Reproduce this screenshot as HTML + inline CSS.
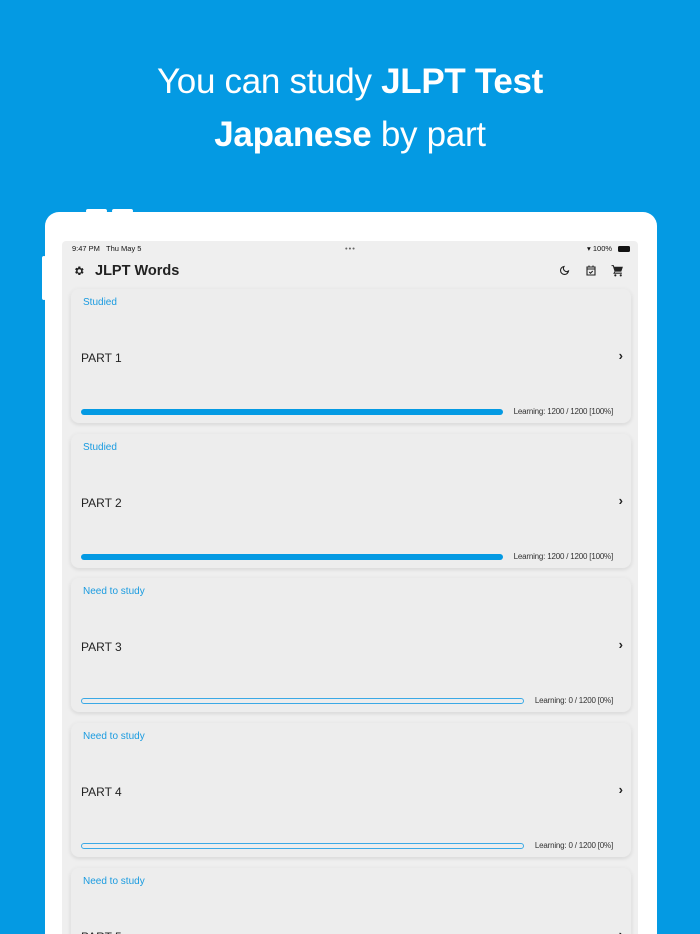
<!DOCTYPE html>
<html><head><meta charset="utf-8"><style>
*{margin:0;padding:0;box-sizing:border-box}
html,body{width:700px;height:934px;overflow:hidden}
body{background:#049ae3;font-family:"Liberation Sans",sans-serif;position:relative}
.h{position:absolute;left:0;width:700px;text-align:center;color:#fff;font-size:35px;letter-spacing:-0.3px}
.h b{font-weight:bold}
.frame{position:absolute;left:45px;top:212px;width:612px;height:722px;background:#fff;border-radius:14px 14px 0 0}
.btn{position:absolute;top:209px;height:4px;width:21px;background:#fff;border-radius:2px}
.side{position:absolute;left:42px;top:256px;width:4px;height:44px;background:#fff;border-radius:2px}
.screen{position:absolute;left:62px;top:241px;width:576px;height:693px;background:#efefef;border-radius:4px 4px 0 0;overflow:hidden}
.sb{position:absolute;top:3px;font-size:7.5px;color:#111}
.title{position:absolute;left:33px;top:22px;font-size:14.5px;font-weight:bold;color:#222}
.card{position:absolute;left:9px;width:560px;height:134px;background:#ededed;border-radius:8px;box-shadow:0 1px 4px rgba(0,0,0,.15),0 0 2px rgba(255,255,255,.9)}
.lab{position:absolute;left:12px;top:8px;font-size:10px;color:#1a9be0}
.part{position:absolute;left:10px;top:62px;font-size:12px;color:#222}
.chev{position:absolute;right:8px;top:59px;font-size:13px;color:#222;font-weight:bold}
.bar{position:absolute;left:10px;top:120px;height:6px;border-radius:3px}
.full{width:422px;background:#049ae3}
.empty{width:443px;border:1px solid #3aa9e6;background:transparent}
.lt{position:absolute;right:18px;top:118px;font-size:8px;color:#333;letter-spacing:-0.2px}
</style></head><body>
<div class="h" style="top:62px">You can study <b>JLPT Test</b></div>
<div class="h" style="top:115px"><b>Japanese</b> by part</div>
<div class="btn" style="left:86px"></div><div class="btn" style="left:112px"></div>
<div class="side"></div>
<div class="frame"></div>
<div class="screen">
<div class="sb" style="left:10px">9:47 PM&nbsp;&nbsp; Thu May 5</div>
<div class="sb" style="left:283px;letter-spacing:1px;color:#666">•••</div>
<div class="sb" style="left:525px">&#9662; 100%</div>
<div style="position:absolute;left:556px;top:5px;width:12px;height:6px;background:#111;border-radius:1.5px"></div>
<svg style="position:absolute;left:11px;top:24px" width="12" height="12" viewBox="0 0 24 24"><path fill="#222" d="M19.1 12.9a7 7 0 0 0 0-1.8l2.1-1.6-2-3.5-2.5 1a7 7 0 0 0-1.6-.9L14.7 3h-4l-.4 2.6a7 7 0 0 0-1.6.9l-2.5-1-2 3.5 2.1 1.6a7 7 0 0 0 0 1.8l-2.1 1.6 2 3.5 2.5-1c.5.4 1 .7 1.6.9l.4 2.6h4l.4-2.6c.6-.2 1.1-.5 1.6-.9l2.5 1 2-3.5zM12.7 15.5a3.5 3.5 0 1 1 0-7 3.5 3.5 0 0 1 0 7z"/></svg>
<div class="title">JLPT Words</div>
<svg style="position:absolute;left:496px;top:24px" width="12" height="12" viewBox="0 0 24 24"><path fill="none" stroke="#222" stroke-width="2.2" d="M12 3a8 8 0 1 0 9 9 6.5 6.5 0 0 1-9-9z"/></svg>
<svg style="position:absolute;left:523px;top:23px" width="12" height="13" viewBox="0 0 24 24"><path fill="none" stroke="#222" stroke-width="2.2" d="M4 5h16v16H4zM4 9h16M8 2v4M16 2v4M8.5 15l2.5 2.5 4.5-4.5"/></svg>
<svg style="position:absolute;left:549px;top:23px" width="13" height="13" viewBox="0 0 24 24"><path fill="#222" d="M1 2h4l1 3h16l-3 9H8l-1 2h13v2H4l2.5-4.5L3.5 4H1zM8 19a2 2 0 1 1 0 4 2 2 0 0 1 0-4zm10 0a2 2 0 1 1 0 4 2 2 0 0 1 0-4z"/></svg>

<div class="card" style="top:48px"><div class="lab">Studied</div><div class="part">PART 1</div><div class="chev">›</div><div class="bar full"></div><div class="lt">Learning: 1200 / 1200 [100%]</div></div>
<div class="card" style="top:193px"><div class="lab">Studied</div><div class="part">PART 2</div><div class="chev">›</div><div class="bar full"></div><div class="lt">Learning: 1200 / 1200 [100%]</div></div>
<div class="card" style="top:337px"><div class="lab">Need to study</div><div class="part">PART 3</div><div class="chev">›</div><div class="bar empty"></div><div class="lt">Learning: 0 / 1200 [0%]</div></div>
<div class="card" style="top:482px"><div class="lab">Need to study</div><div class="part">PART 4</div><div class="chev">›</div><div class="bar empty"></div><div class="lt">Learning: 0 / 1200 [0%]</div></div>
<div class="card" style="top:627px"><div class="lab">Need to study</div><div class="part">PART 5</div><div class="chev">›</div></div>
</div>
</body></html>
